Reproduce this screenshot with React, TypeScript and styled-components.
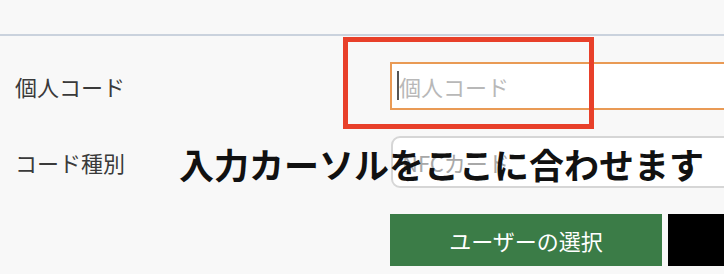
import styled, { createGlobalStyle } from 'styled-components'

const GlobalStyle = createGlobalStyle`
  html, body {
    margin: 0;
    padding: 0;
    overflow: hidden;
    background: #f8f8f8;
  }
  body {
    font-family: "Noto Sans CJK JP", "Noto Sans", sans-serif;
  }
`

const Page = styled.div`
  position: relative;
  width: 724px;
  height: 274px;
  overflow: hidden;
  background: #f8f8f8;
`

const Header = styled.div`
  height: 34px;
  border-bottom: 2px solid #cad2dd;
`

const Form = styled.div`
  display: grid;
  grid-template-columns: 390px 420px;
  row-gap: 26px;
  padding-top: 26px;
  align-items: center;
`

const Label = styled.div`
  padding-left: 15px;
  font-size: 22px;
  color: #3a3a3a;
  line-height: 1;
`

const Field = styled.div`
  position: relative;
  height: 48px;
`

const TextInput = styled.input`
  box-sizing: border-box;
  width: 100%;
  height: 100%;
  padding: 0 0 0 7px;
  border: 2px solid #e99a55;
  background: #fff;
  font-family: inherit;
  font-size: 22px;
  outline: none;
  color: #333;

  &::placeholder {
    color: #b8b8b8;
  }
`

const Caret = styled.span`
  position: absolute;
  left: 7px;
  top: 9px;
  width: 2px;
  height: 29px;
  background: #555;
`

const Select = styled.div`
  box-sizing: border-box;
  height: 52px;
  margin-left: 1px;
  padding-left: 9px;
  display: flex;
  align-items: center;
  border: 2px solid #d6d6d6;
  border-radius: 9px;
  background: #fff;
  font-size: 22px;
  color: #a8a8a8;
`

const Actions = styled.div`
  display: flex;
  gap: 6px;
`

const Button = styled.button<{ $tone: 'green' | 'black' }>`
  flex: none;
  width: ${(p) => (p.$tone === 'green' ? '272px' : '200px')};
  height: 52px;
  border: none;
  background: ${(p) => (p.$tone === 'green' ? '#3b7c47' : '#000')};
  color: #fff;
  font-family: inherit;
  font-size: 22px;
  padding: 0;
`

const Highlight = styled.div`
  position: absolute;
  left: 343px;
  top: 37px;
  width: 251px;
  height: 92px;
  box-sizing: border-box;
  border: 5px solid #e8402a;
  pointer-events: none;
`

const Note = styled.div`
  position: absolute;
  left: 179px;
  top: 143px;
  font-size: 35px;
  font-weight: 700;
  color: #111;
  line-height: 1.2;
  white-space: nowrap;
`

export default function App() {
  return (
    <Page>
      <GlobalStyle />
      <Header />
      <Form>
        <Label>個人コード</Label>
        <Field>
          <TextInput placeholder="個人コード" readOnly />
          <Caret />
        </Field>
        <Label>コード種別</Label>
        <Select>NFCカード</Select>
        <div />
        <Actions>
          <Button $tone="green">ユーザーの選択</Button>
          <Button $tone="black" />
        </Actions>
      </Form>
      <Highlight />
      <Note>入力カーソルをここに合わせます</Note>
    </Page>
  )
}
